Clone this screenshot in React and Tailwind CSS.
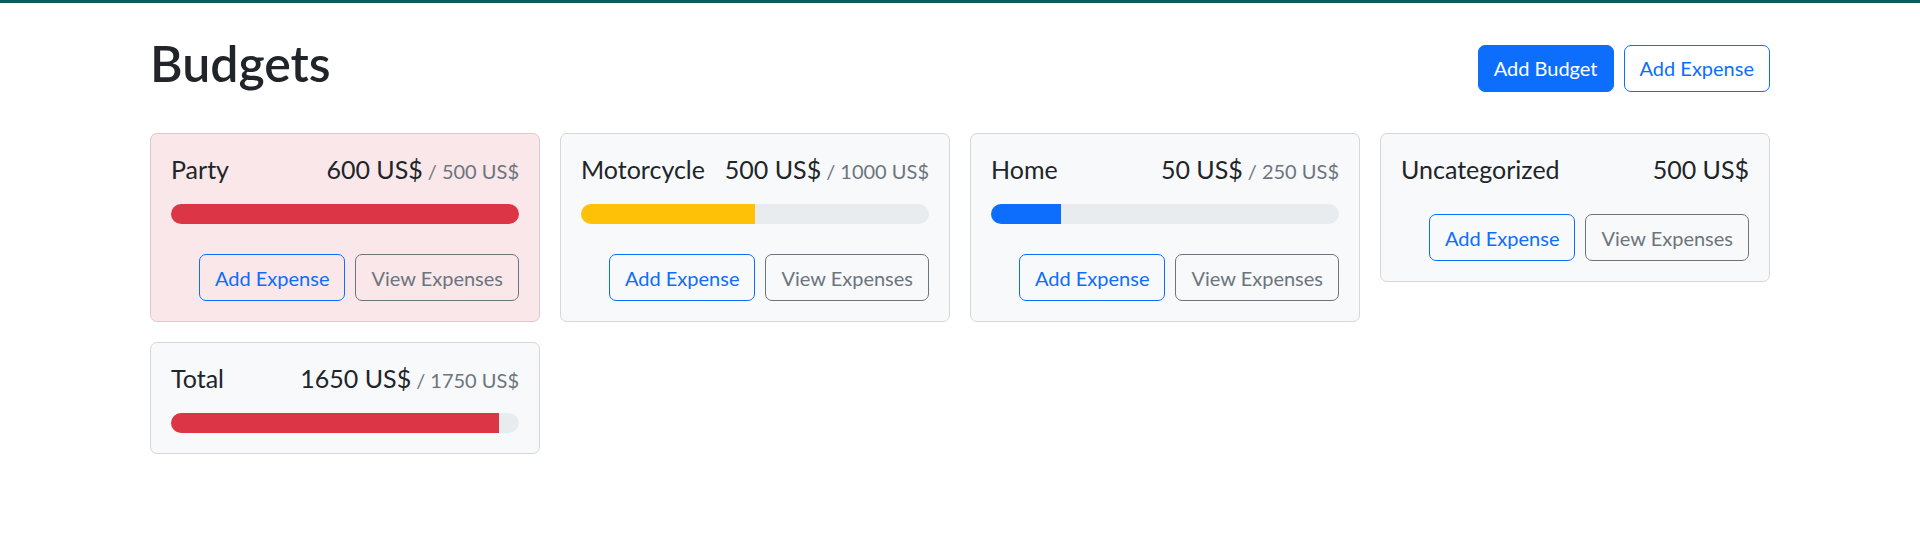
import React from 'react';

const budgets = [
  { id: 'party', name: 'Party', amount: 600, max: 500 },
  { id: 'moto', name: 'Motorcycle', amount: 500, max: 1000 },
  { id: 'home', name: 'Home', amount: 50, max: 250 },
];

const fmt = (n) => `${n} US$`;

const barColor = (amount, max) => {
  const ratio = amount / max;
  if (ratio < 0.5) return 'bg-[#0d6efd]';
  if (ratio < 0.75) return 'bg-[#ffc107]';
  return 'bg-[#dc3545]';
};

const OutlineButton = ({ variant = 'primary', children }) => (
  <button
    className={`h-[47px] px-[15px] rounded-[7px] border text-[20px] leading-[30px] bg-transparent ${
      variant === 'primary'
        ? 'border-[#0d6efd] text-[#0d6efd]'
        : 'border-[#6c757d] text-[#6c757d]'
    }`}
  >
    {children}
  </button>
);

const BudgetCard = ({ name, amount, max, gray, hideButtons }) => {
  const over = max && amount > max;
  const pct = max ? Math.min(100, (amount / max) * 100) : 0;

  return (
    <div
      className={`rounded-[7px] border border-[#d5d6d7] p-5 ${
        over ? 'bg-[#f9e7e9] border-[#dcc9cb]' : gray ? 'bg-[#f8f9fa]' : 'bg-white'
      }`}
    >
      {/* title row */}
      <div className="flex justify-between items-baseline h-[30px] mb-5 text-[25px] leading-[30px] text-[#212529]">
        <div className="mr-[10px]">{name}</div>
        <div className="flex items-baseline">
          {fmt(amount)}
          {max && (
            <span className="text-[20px] leading-[24px] text-[#6c757d] ml-[5px]">/ {fmt(max)}</span>
          )}
        </div>
      </div>

      {max && (
        <div className="h-5 rounded-full bg-[#e9ecef] overflow-hidden flex">
          <div className={`h-full ${barColor(amount, max)}`} style={{ width: `${pct}%` }} />
        </div>
      )}

      {!hideButtons && (
        <div className="flex items-center gap-[10px] mt-[30px]">
          <div className="ml-auto" />
          <OutlineButton variant="primary">Add Expense</OutlineButton>
          <OutlineButton variant="secondary">View Expenses</OutlineButton>
        </div>
      )}
    </div>
  );
};

export default function App() {
  const total = budgets.reduce((s, b) => s + b.amount, 0) + 500;
  const totalMax = budgets.reduce((s, b) => s + b.max, 0);

  return (
    <div
      className="min-h-[537px] bg-white border-t-[3px] border-[#0f5a61]"
      style={{ fontFamily: 'Lato, "Liberation Sans", sans-serif' }}
    >
      <div className="w-[1620px] mx-auto mt-[30px]">
        {/* header */}
        <div className="flex items-center gap-[10px] mb-[30px]">
          <h1 className="mr-auto mb-[10px] text-[50px] leading-[60px] font-semibold text-[#212529]">
            Budgets
          </h1>
          <button className="h-[47px] px-[15px] rounded-[7px] border border-[#0d6efd] bg-[#0d6efd] text-white text-[20px] leading-[30px]">
            Add Budget
          </button>
          <OutlineButton variant="primary">Add Expense</OutlineButton>
        </div>

        {/* budget grid */}
        <div className="grid grid-cols-4 gap-5 items-start">
          {budgets.map((b) => (
            <BudgetCard key={b.id} name={b.name} amount={b.amount} max={b.max} gray />
          ))}
          <BudgetCard name="Uncategorized" amount={500} gray />
          <BudgetCard name="Total" amount={total} max={totalMax} gray hideButtons />
        </div>
      </div>
    </div>
  );
}
